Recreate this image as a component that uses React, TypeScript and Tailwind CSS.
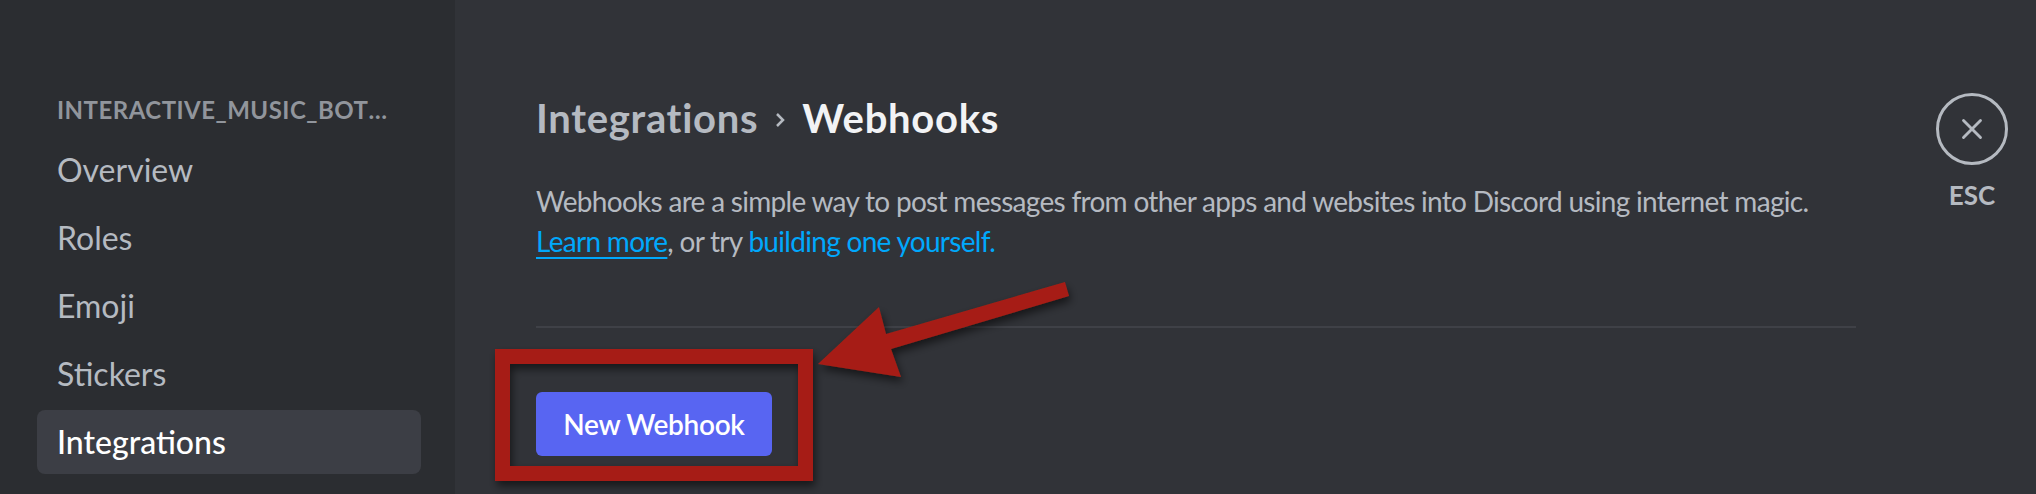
import { X } from "lucide-react";

const navItems = ["Overview", "Roles", "Emoji", "Stickers", "Integrations"];

// Red callout drawn over the screenshot: box round the button and an arrow pointing at it
const Callout = () => (
  <svg
    className="pointer-events-none absolute inset-0"
    width="2036"
    height="494"
    viewBox="0 0 2036 494"
    fill="none"
  >
    <defs>
      <filter id="drop" x="-10%" y="-10%" width="130%" height="140%">
        <feDropShadow dx="2" dy="5" stdDeviation="4" floodColor="#000" floodOpacity="0.55" />
      </filter>
    </defs>
    <g filter="url(#drop)">
      <rect x="502.5" y="356.5" width="303" height="117" stroke="#a61f14" strokeWidth="15" />
      <polygon
        points="818,364 879,307 886,334 1065,282 1069,296 891,349 901,377"
        fill="#a61f14"
      />
    </g>
  </svg>
);

export default function App() {
  return (
    <div
      className="relative flex h-[494px] w-[2036px] overflow-hidden"
      style={{ fontFamily: "Lato, 'Noto Sans', sans-serif" }}
    >
      {/* Sidebar */}
      <aside className="w-[455px] shrink-0 bg-[#2b2d31] pt-[94px] pl-[37px]">
        <div className="w-[384px]">
          <div className="truncate pl-[20px] pr-[26px] pb-[12px] text-[24px] font-bold uppercase leading-[32px] tracking-[0.02em] text-[#91959c]">
            INTERACTIVE_MUSIC_BOT_SERVER
          </div>
          {navItems.map((item) => {
            const active = item === "Integrations";
            return (
              <div
                key={item}
                className={`mb-[4px] flex h-[64px] items-center rounded-[8px] px-[20px] text-[32px] leading-[64px] ${
                  active ? "bg-[#3c3e45] font-medium text-white" : "text-[#b5bac1]"
                }`}
              >
                {item}
              </div>
            );
          })}
        </div>
      </aside>

      {/* Main content */}
      <main className="flex flex-1 bg-[#313338]">
        <div className="ml-[81px] w-[1320px] shrink-0 pt-[94px]">
          <h2 className="flex items-center text-[40px] font-bold leading-[48px] tracking-[0.7px]">
            <span className="text-[#b5bac1]">Integrations</span>
            <svg className="mx-[17px] mt-[4px]" width="10" height="14" viewBox="0 0 10 14" fill="none">
              <polyline points="2,1 8,7 2,13" stroke="#b5bac1" strokeWidth="2.5" />
            </svg>
            <span className="text-[#f2f3f5]">Webhooks</span>
          </h2>
          <p className="mt-[39px] text-[28px] leading-[40px] tracking-[-0.7px] text-[#b5bac1]">
            Webhooks are a simple way to post messages from other apps and websites into Discord using
            internet magic.
            <br />
            <a className="text-[#00a8fc] underline underline-offset-[5px]">Learn more</a>, or try{" "}
            <a className="text-[#00a8fc]">building one yourself.</a>
          </p>
          <div className="mt-[65px] h-[2px] w-full bg-[#3f4147]" />
          <button className="mt-[64px] flex h-[64px] w-[236px] items-center justify-center rounded-[6px] bg-[#5865f2] text-[28px] font-semibold tracking-[-0.3px] text-white">
            New Webhook
          </button>
        </div>

        {/* Close */}
        <div className="ml-[80px] flex flex-col items-center pt-[93px]">
          <div className="flex h-[72px] w-[72px] items-center justify-center rounded-full border-[3px] border-[#b5bac1] text-[#b5bac1]">
            <X size={34} strokeWidth={2} />
          </div>
          <div className="mt-[14px] text-[26px] font-bold leading-[32px] text-[#b5bac1]">ESC</div>
        </div>
      </main>

      <Callout />
    </div>
  );
}
